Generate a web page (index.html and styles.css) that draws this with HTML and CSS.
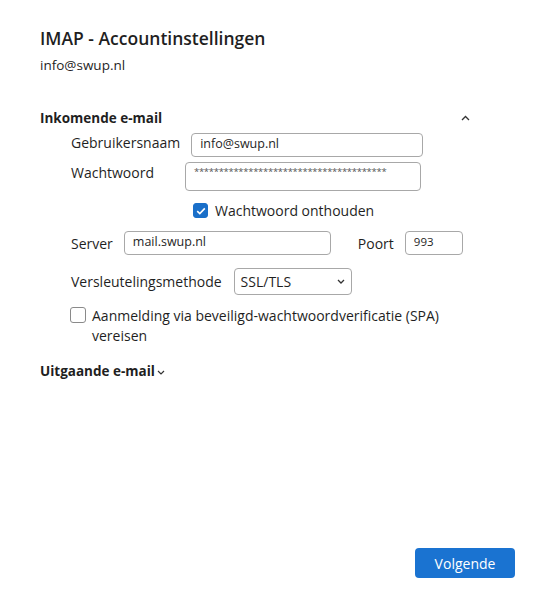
FILE: index.html
```html
<!DOCTYPE html>
<html lang="nl">
<head>
    <meta charset="UTF-8">
    <meta name="viewport" content="width=device-width, initial-scale=1.0">
    <title>IMAP - Accountinstellingen</title>
    <link rel="stylesheet" href="styles.css">
</head>
<body>
    <div class="dialog">
        <h1>IMAP - Accountinstellingen</h1>
        <div class="account">info@swup.nl</div>

        <div class="section-head">
            <span>Inkomende e-mail</span>
            <svg class="chev up" width="9" height="6" viewBox="0 0 9 6"><path d="M1 5 L4.5 1.5 L8 5" fill="none" stroke="#333" stroke-width="1.3"/></svg>
        </div>

        <div class="fields">
            <div class="row">
                <label class="lbl">Gebruikersnaam</label>
                <div class="input user">info@swup.nl</div>
            </div>
            <div class="row pw-row">
                <label class="lbl">Wachtwoord</label>
                <div class="input pw">***************************************</div>
            </div>
            <div class="row remember">
                <span class="check on">
                    <svg width="10" height="8" viewBox="0 0 10 8"><path d="M1.2 4.2 L3.8 6.6 L8.8 1.4" fill="none" stroke="#fff" stroke-width="1.6"/></svg>
                </span>
                <span>Wachtwoord onthouden</span>
            </div>
            <div class="row server-row">
                <label class="lbl">Server</label>
                <div class="input server">mail.swup.nl</div>
                <label class="lbl port-lbl">Poort</label>
                <div class="input port">993</div>
            </div>
            <div class="row enc-row">
                <label class="lbl">Versleutelingsmethode</label>
                <div class="input select">
                    <span>SSL/TLS</span>
                    <svg width="8" height="5" viewBox="0 0 8 5"><path d="M1 1 L4 4 L7 1" fill="none" stroke="#333" stroke-width="1.3"/></svg>
                </div>
            </div>
            <div class="row spa">
                <span class="check"></span>
                <span class="spa-text">Aanmelding via beveiligd-wachtwoordverificatie (SPA) vereisen</span>
            </div>
        </div>

        <div class="section-head out">
            <span>Uitgaande e-mail</span>
            <svg class="chev" width="8" height="5" viewBox="0 0 8 5"><path d="M1 1 L4 4 L7 1" fill="none" stroke="#333" stroke-width="1.2"/></svg>
        </div>

        <div class="footer">
            <button class="primary">Volgende</button>
        </div>
    </div>
</body>
</html>
```

FILE: styles.css
```css
body {
    margin: 0;
    background: #fff;
    color: #1f1f1f;
    font-family: "Open Sans", "Noto Sans", sans-serif;
    font-size: 14px;
}
.dialog {
    width: 548px;
    height: 602px;
    box-sizing: border-box;
    padding: 26px 33px 0 40px;
    display: flex;
    flex-direction: column;
}
h1 {
    margin: 0;
    font-size: 17.5px;
    font-weight: 600;
    line-height: 24px;
}
.account {
    margin-top: 6px;
    line-height: 18px;
    font-size: 13.5px;
}
.section-head {
    display: flex;
    align-items: center;
    margin-top: 34px;
    font-weight: 700;
    font-size: 13.5px;
    line-height: 20px;
}
.section-head .up {
    margin-left: auto;
    margin-right: 45px;
}
.section-head.out {
    margin-top: 15px;
}
.section-head.out .chev {
    margin-left: 2px;
    margin-top: 2px;
}
.fields {
    padding-left: 31px;
}
.row {
    display: flex;
    align-items: center;
}
.input {
    box-sizing: border-box;
    border: 1px solid #a8a8a8;
    border-radius: 4px;
    padding: 0 8px;
    font-size: 12.5px;
    line-height: 20px;
    background: #fff;
}
.user {
    margin-left: 11px;
    width: 232px;
    height: 24px;
    margin-top: 5px;
}
.pw-row {
    margin-top: 5px;
    align-items: flex-start;
}
.pw-row .lbl {
    margin-top: 1px;
}
.pw {
    margin-left: 31px;
    width: 236px;
    height: 29px;
    font-size: 9.5px;
    line-height: 17px;
    letter-spacing: -0.3px;
    color: #555;
    overflow: hidden;
    white-space: nowrap;
}
.remember {
    margin-top: 10px;
    padding-left: 122px;
    gap: 7px;
}
.check {
    box-sizing: border-box;
    width: 15px;
    height: 15px;
    border: 1px solid #8a8a8a;
    border-radius: 3px;
    display: flex;
    align-items: center;
    justify-content: center;
    flex: none;
}
.check.on {
    background: #1a6fc9;
    border-color: #1a6fc9;
}
.server-row {
    margin-top: 11px;
}
.server {
    margin-left: 11px;
    width: 207px;
    height: 24px;
}
.port-lbl {
    margin-left: 27px;
}
.port {
    margin-left: 11px;
    width: 58px;
    height: 24px;
    font-size: 11.5px;
}
.enc-row {
    margin-top: 13px;
}
.select {
    margin-left: 12px;
    width: 118px;
    height: 27px;
    display: flex;
    align-items: center;
    justify-content: space-between;
    font-size: 14px;
    padding: 0 6px 0 6px;
}
.spa {
    margin-top: 11px;
    align-items: flex-start;
    gap: 6px;
    padding-left: 0;
}
.spa .check {
    width: 16px;
    height: 16px;
    margin-top: 1px;
    margin-left: -1px;
}
.spa-text {
    width: 390px;
    line-height: 20px;
}
.footer {
    margin-top: auto;
    display: flex;
    justify-content: flex-end;
    padding-bottom: 24px;
}
.primary {
    width: 100px;
    height: 30px;
    border: none;
    border-radius: 4px;
    background: #1a73d1;
    color: #fff;
    font-family: inherit;
    font-size: 14px;
    margin-right: 0;
}
```
